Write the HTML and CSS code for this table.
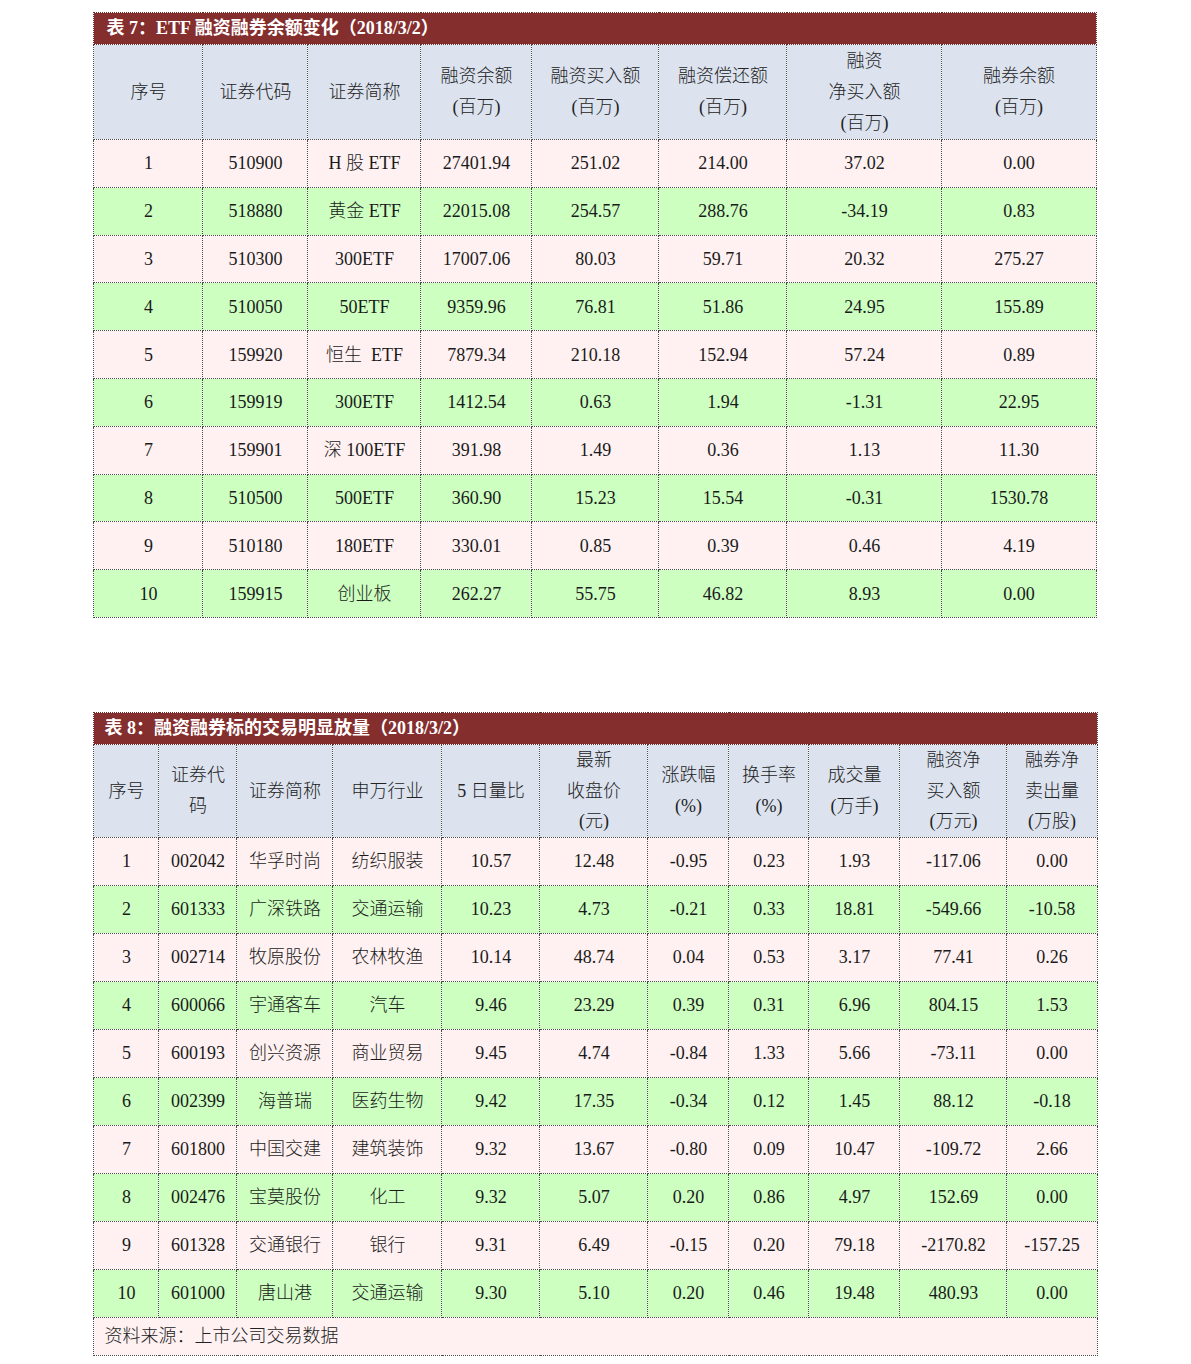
FILE: index.html
```html
<!DOCTYPE html>
<html lang="zh-CN">
<head>
<meta charset="utf-8">
<title>融资融券</title>
<link rel="stylesheet" href="styles.css">
</head>
<body>
<div class="page">
<table class="grid t7">
  <colgroup>
    <col style="width:109px"><col style="width:105px"><col style="width:113px"><col style="width:111px"><col style="width:127px"><col style="width:128px"><col style="width:155px"><col style="width:154px">
  </colgroup>
  <thead>
    <tr class="title"><th colspan="8">表 7：ETF 融资融券余额变化（2018/3/2）</th></tr>
    <tr class="head">
      <th>序号</th><th>证券代码</th><th>证券简称</th><th>融资余额<br>(百万)</th><th>融资买入额<br>(百万)</th><th>融资偿还额<br>(百万)</th><th>融资<br>净买入额<br>(百万)</th><th>融券余额<br>(百万)</th>
    </tr>
  </thead>
  <tbody>
    <tr class="pink"><td>1</td><td>510900</td><td>H 股 ETF</td><td>27401.94</td><td>251.02</td><td>214.00</td><td>37.02</td><td>0.00</td></tr>
    <tr class="green"><td>2</td><td>518880</td><td>黄金 ETF</td><td>22015.08</td><td>254.57</td><td>288.76</td><td>-34.19</td><td>0.83</td></tr>
    <tr class="pink"><td>3</td><td>510300</td><td>300ETF</td><td>17007.06</td><td>80.03</td><td>59.71</td><td>20.32</td><td>275.27</td></tr>
    <tr class="green"><td>4</td><td>510050</td><td>50ETF</td><td>9359.96</td><td>76.81</td><td>51.86</td><td>24.95</td><td>155.89</td></tr>
    <tr class="pink"><td>5</td><td>159920</td><td>恒生&nbsp; ETF</td><td>7879.34</td><td>210.18</td><td>152.94</td><td>57.24</td><td>0.89</td></tr>
    <tr class="green"><td>6</td><td>159919</td><td>300ETF</td><td>1412.54</td><td>0.63</td><td>1.94</td><td>-1.31</td><td>22.95</td></tr>
    <tr class="pink"><td>7</td><td>159901</td><td>深 100ETF</td><td>391.98</td><td>1.49</td><td>0.36</td><td>1.13</td><td>11.30</td></tr>
    <tr class="green"><td>8</td><td>510500</td><td>500ETF</td><td>360.90</td><td>15.23</td><td>15.54</td><td>-0.31</td><td>1530.78</td></tr>
    <tr class="pink"><td>9</td><td>510180</td><td>180ETF</td><td>330.01</td><td>0.85</td><td>0.39</td><td>0.46</td><td>4.19</td></tr>
    <tr class="green"><td>10</td><td>159915</td><td>创业板</td><td>262.27</td><td>55.75</td><td>46.82</td><td>8.93</td><td>0.00</td></tr>
  </tbody>
</table>

<table class="grid t8">
  <colgroup>
    <col style="width:65px"><col style="width:78px"><col style="width:96px"><col style="width:109px"><col style="width:98px"><col style="width:108px"><col style="width:81px"><col style="width:80px"><col style="width:91px"><col style="width:107px"><col style="width:90px">
  </colgroup>
  <thead>
    <tr class="title"><th colspan="11">表 8：融资融券标的交易明显放量（2018/3/2）</th></tr>
    <tr class="head">
      <th>序号</th><th>证券代<br>码</th><th>证券简称</th><th>申万行业</th><th>5 日量比</th><th>最新<br>收盘价<br>(元)</th><th>涨跌幅<br>(%)</th><th>换手率<br>(%)</th><th>成交量<br>(万手)</th><th>融资净<br>买入额<br>(万元)</th><th>融券净<br>卖出量<br>(万股)</th>
    </tr>
  </thead>
  <tbody>
    <tr class="pink"><td>1</td><td>002042</td><td>华孚时尚</td><td>纺织服装</td><td>10.57</td><td>12.48</td><td>-0.95</td><td>0.23</td><td>1.93</td><td>-117.06</td><td>0.00</td></tr>
    <tr class="green"><td>2</td><td>601333</td><td>广深铁路</td><td>交通运输</td><td>10.23</td><td>4.73</td><td>-0.21</td><td>0.33</td><td>18.81</td><td>-549.66</td><td>-10.58</td></tr>
    <tr class="pink"><td>3</td><td>002714</td><td>牧原股份</td><td>农林牧渔</td><td>10.14</td><td>48.74</td><td>0.04</td><td>0.53</td><td>3.17</td><td>77.41</td><td>0.26</td></tr>
    <tr class="green"><td>4</td><td>600066</td><td>宇通客车</td><td>汽车</td><td>9.46</td><td>23.29</td><td>0.39</td><td>0.31</td><td>6.96</td><td>804.15</td><td>1.53</td></tr>
    <tr class="pink"><td>5</td><td>600193</td><td>创兴资源</td><td>商业贸易</td><td>9.45</td><td>4.74</td><td>-0.84</td><td>1.33</td><td>5.66</td><td>-73.11</td><td>0.00</td></tr>
    <tr class="green"><td>6</td><td>002399</td><td>海普瑞</td><td>医药生物</td><td>9.42</td><td>17.35</td><td>-0.34</td><td>0.12</td><td>1.45</td><td>88.12</td><td>-0.18</td></tr>
    <tr class="pink"><td>7</td><td>601800</td><td>中国交建</td><td>建筑装饰</td><td>9.32</td><td>13.67</td><td>-0.80</td><td>0.09</td><td>10.47</td><td>-109.72</td><td>2.66</td></tr>
    <tr class="green"><td>8</td><td>002476</td><td>宝莫股份</td><td>化工</td><td>9.32</td><td>5.07</td><td>0.20</td><td>0.86</td><td>4.97</td><td>152.69</td><td>0.00</td></tr>
    <tr class="pink"><td>9</td><td>601328</td><td>交通银行</td><td>银行</td><td>9.31</td><td>6.49</td><td>-0.15</td><td>0.20</td><td>79.18</td><td>-2170.82</td><td>-157.25</td></tr>
    <tr class="green"><td>10</td><td>601000</td><td>唐山港</td><td>交通运输</td><td>9.30</td><td>5.10</td><td>0.20</td><td>0.46</td><td>19.48</td><td>480.93</td><td>0.00</td></tr>
    <tr class="pink foot"><td colspan="11">资料来源：上市公司交易数据</td></tr>
  </tbody>
</table>
</div>
</body>
</html>
```

FILE: styles.css
```css
html, body {
  margin: 0;
  padding: 0;
  background: #ffffff;
}

body {
  font-family: "Liberation Serif", "Noto Sans CJK SC", serif;
  font-size: 18px;
  font-weight: 300;
  color: #1a1a1a;
}

.page {
  padding-top: 12px;
  display: flex;
  flex-direction: column;
  align-items: center;
}

.grid {
  border-collapse: collapse;
  table-layout: fixed;
}

.t7 {
  width: 1002px;
  margin-left: -1px;
}

.t8 {
  width: 1003px;
  margin-top: 94px;
}

.grid th,
.grid td {
  border: 1px dotted #4a4a4a;
  padding: 0;
  text-align: center;
  vertical-align: middle;
  font-weight: 300;
  overflow: hidden;
  white-space: nowrap;
}

.grid .title th {
  background: #852e2e;
  color: #ffffff;
  font-weight: bold;
  text-align: left;
  padding-left: 12px;
  height: 31px;
  line-height: 31px;
  border-color: #6b2a2a;
}

.t8 .title th {
  padding-left: 10px;
}

.grid .head th {
  background: #dce3ef;
  color: #222222;
}

.t7 .head th {
  height: 94px;
  line-height: 31px;
}

.t8 .head th {
  height: 92px;
  line-height: 30.5px;
}

.grid tbody td {
  height: 46.8px;
  line-height: 24px;
}

.t8 tbody td {
  height: 47px;
}

.pink td {
  background: #fff1f1;
}

.green td {
  background: #ccffc0;
}

.grid tbody .foot td {
  height: 37px;
  text-align: left;
  padding-left: 10px;
  color: #222222;
}
```
